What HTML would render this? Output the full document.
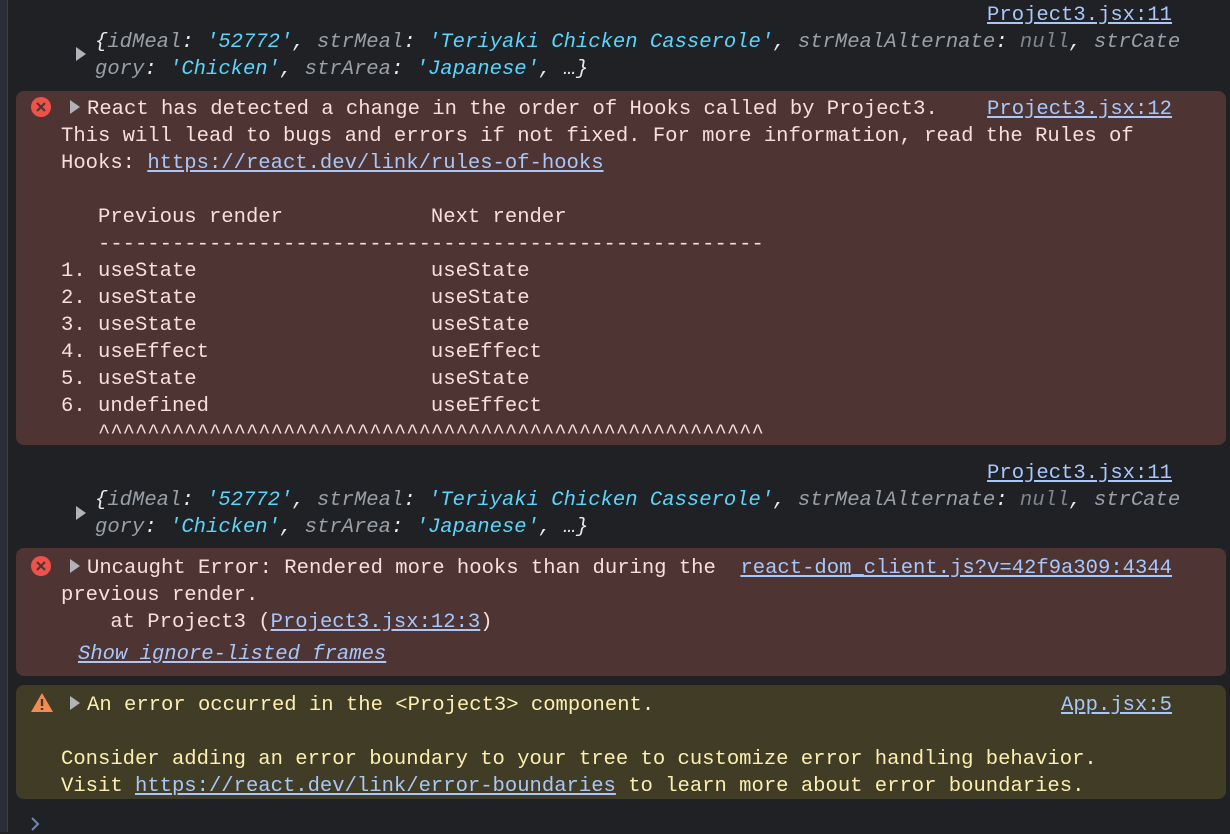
<!DOCTYPE html>
<html><head><meta charset="utf-8"><style>
html,body{margin:0;padding:0}
body{width:1230px;height:832px;background:#1f2125;position:relative;overflow:hidden;font-family:"Liberation Mono",monospace;font-size:20.55px;}
.strip{position:absolute;left:0;top:0;width:7px;height:832px;background:#2a2e36;border-right:1px solid #3a3f4a}
.box{position:absolute;left:16px;width:1210px;border-radius:8px}
.err{background:#4e3534}
.warn{background:#413c26}
.t{position:absolute;left:0;top:2px;width:1230px;height:832px}
.l{position:absolute;white-space:pre;line-height:27px;height:27px}
.e{color:#f9dedc}.w{color:#fdefb0}
a{color:#a8c7fa;text-decoration:underline}
.src{position:absolute;right:58px;white-space:pre;line-height:27px;color:#a8c7fa;text-decoration:underline}
.obj{color:#e8eaed;font-style:italic}
.k{color:#9aa0a6}.s{color:#5cd5fb}.n{color:#80868b}
.tri{position:absolute;width:0;height:0;border-left:10px solid #b0b3b8;border-top:7px solid transparent;border-bottom:7px solid transparent}
</style></head><body>
<div class="strip"></div>
<div class="box err" style="top:91px;height:354px"></div>
<div class="box err" style="top:548px;height:128px"></div>
<div class="box warn" style="top:685px;height:114px"></div>
<svg style="position:absolute;left:31px;top:97px" width="20" height="20"><circle cx="10" cy="10" r="10" fill="#f0524a"/><path d="M6 6L14 14M14 6L6 14" stroke="#4e3534" stroke-width="2.2"/></svg>
<svg style="position:absolute;left:31px;top:556px" width="20" height="20"><circle cx="10" cy="10" r="10" fill="#f0524a"/><path d="M6 6L14 14M14 6L6 14" stroke="#4e3534" stroke-width="2.2"/></svg>
<svg style="position:absolute;left:30px;top:692px" width="24" height="21"><path d="M12 1L23 20H1Z" fill="#f28b54"/><path d="M12 7V14M12 16V18" stroke="#413c26" stroke-width="2.4"/></svg>
<div class="tri" style="left:76px;top:47px"></div>
<div class="tri" style="left:70px;top:100px"></div>
<div class="tri" style="left:76px;top:506px"></div>
<div class="tri" style="left:70px;top:559px"></div>
<div class="tri" style="left:70px;top:696px"></div>
<div class="t">
<div class="src" style="top:0">Project3.jsx:11</div>
<div class="l obj" style="left:95px;top:27px">{<span class="k">idMeal</span>: <span class="s">'52772'</span>, <span class="k">strMeal</span>: <span class="s">'Teriyaki Chicken Casserole'</span>, <span class="k">strMealAlternate</span>: <span class="n">null</span>, <span class="k">strCate</span></div>
<div class="l obj" style="left:95px;top:54px"><span class="k">gory</span>: <span class="s">'Chicken'</span>, <span class="k">strArea</span>: <span class="s">'Japanese'</span>, …}</div>

<div class="l e" style="left:87px;top:94px">React has detected a change in the order of Hooks called by Project3.</div>
<div class="src" style="top:94px">Project3.jsx:12</div>
<div class="l e" style="left:61px;top:121px">This will lead to bugs and errors if not fixed. For more information, read the Rules of</div>
<div class="l e" style="left:61px;top:148px">Hooks: <a>https://react.dev/link/rules-of-hooks</a></div>
<div class="l e" style="left:61px;top:202px">   Previous render            Next render</div>
<div class="l e" style="left:61px;top:229px">   ------------------------------------------------------</div>
<div class="l e" style="left:61px;top:256px">1. useState                   useState</div>
<div class="l e" style="left:61px;top:283px">2. useState                   useState</div>
<div class="l e" style="left:61px;top:310px">3. useState                   useState</div>
<div class="l e" style="left:61px;top:337px">4. useEffect                  useEffect</div>
<div class="l e" style="left:61px;top:364px">5. useState                   useState</div>
<div class="l e" style="left:61px;top:391px">6. undefined                  useEffect</div>
<div class="l e" style="left:61px;top:418px">   ^^^^^^^^^^^^^^^^^^^^^^^^^^^^^^^^^^^^^^^^^^^^^^^^^^^^^^</div>

<div class="src" style="top:458px">Project3.jsx:11</div>
<div class="l obj" style="left:95px;top:485px">{<span class="k">idMeal</span>: <span class="s">'52772'</span>, <span class="k">strMeal</span>: <span class="s">'Teriyaki Chicken Casserole'</span>, <span class="k">strMealAlternate</span>: <span class="n">null</span>, <span class="k">strCate</span></div>
<div class="l obj" style="left:95px;top:512px"><span class="k">gory</span>: <span class="s">'Chicken'</span>, <span class="k">strArea</span>: <span class="s">'Japanese'</span>, …}</div>

<div class="l e" style="left:87px;top:553px">Uncaught Error: Rendered more hooks than during the</div>
<div class="src" style="top:553px">react-dom_client.js?v=42f9a309:4344</div>
<div class="l e" style="left:61px;top:580px">previous render.</div>
<div class="l e" style="left:61px;top:607px">    at Project3 (<a>Project3.jsx:12:3</a>)</div>
<div class="l" style="left:78px;top:639px;font-style:italic"><a>Show ignore-listed frames</a></div>

<div class="l w" style="left:87px;top:690px">An error occurred in the &lt;Project3&gt; component.</div>
<div class="src" style="top:690px">App.jsx:5</div>
<div class="l w" style="left:61px;top:744px">Consider adding an error boundary to your tree to customize error handling behavior.</div>
<div class="l w" style="left:61px;top:771px">Visit <a>https://react.dev/link/error-boundaries</a> to learn more about error boundaries.</div>
</div>
<svg style="position:absolute;left:30px;top:816px" width="12" height="16"><path d="M2 2L8 8L2 14" stroke="#6f86b8" stroke-width="2" fill="none"/></svg>
</body></html>
